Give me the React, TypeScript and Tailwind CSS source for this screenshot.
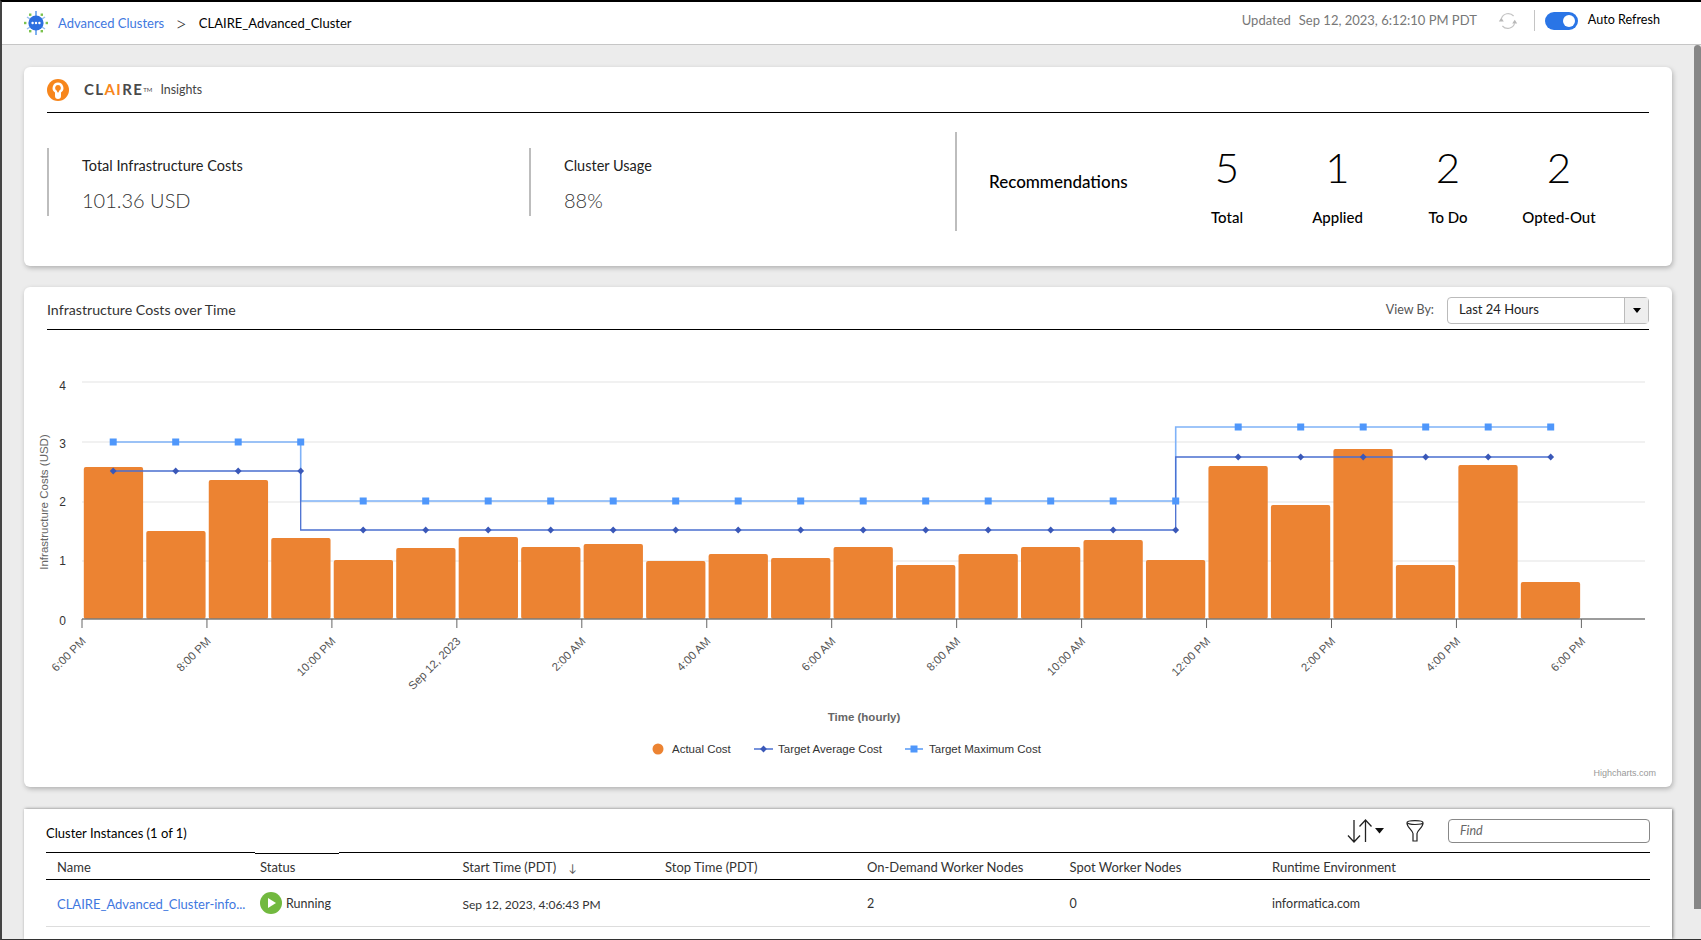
import React from 'react';

const sans = "font-['Lato','Noto_Sans',sans-serif]";

const barTops = [467, 531, 480, 538, 560, 548, 537, 547, 544, 561, 554, 558, 547, 565, 554, 547, 540, 560, 466, 505, 449, 565, 465, 582];
const tickLabels = ['6:00 PM', '8:00 PM', '10:00 PM', 'Sep 12, 2023', '2:00 AM', '4:00 AM', '6:00 AM', '8:00 AM', '10:00 AM', '12:00 PM', '2:00 PM', '4:00 PM', '6:00 PM'];

const baseY = 619;
const tickX = (i: number) => 82 + i * 124.95;
const pointX = (i: number) => 113.2 + i * 62.5;
const maxY = (i: number) => (i <= 3 ? 442 : i <= 17 ? 501 : 427);
const avgY = (i: number) => (i <= 3 ? 471 : i <= 17 ? 530 : 457);

function stepPath(y: (i: number) => number) {
  let d = `M${pointX(0)} ${y(0)}`;
  for (let i = 1; i < 24; i++) {
    const prev = pointX(i - 1);
    d += ` L${prev} ${y(i)} L${pointX(i)} ${y(i)}`;
  }
  return d;
}

function CostChart() {
  return (
    <svg viewBox="24 330 1648 457" className="block w-full h-[457px]">
      {[382, 442, 502, 561].map((y) => (
        <line key={y} x1={82} x2={1645} y1={y} y2={y} stroke="#ececec" strokeWidth={1.4} />
      ))}
      {[0, 1, 2, 3, 4].map((n) => (
        <text key={n} x={62.5} y={[624.5, 565, 506, 448, 389.5][n]} textAnchor="middle" fontSize={12} fill="#333333" fontFamily="Liberation Sans">
          {n}
        </text>
      ))}
      <text transform="translate(48 502) rotate(-90)" textAnchor="middle" fontSize={11.5} fill="#666666" fontFamily="Liberation Sans">
        Infrastructure Costs (USD)
      </text>

      {barTops.map((top, i) => (
        <rect key={i} x={82 + i * 62.48 + 1.8} y={top} width={59.3} height={baseY - top} rx={2} fill="#ec8332" />
      ))}

      <line x1={82} x2={1645} y1={baseY} y2={baseY} stroke="#7b7b7b" strokeWidth={1.5} />
      {tickLabels.map((label, i) => (
        <g key={i}>
          <line x1={tickX(i)} x2={tickX(i)} y1={baseY} y2={baseY + 9} stroke="#666666" strokeWidth={1} />
          <text transform={`translate(${tickX(i) + 4.5} 642) rotate(-45)`} textAnchor="end" fontSize={11.5} fill="#555555" fontFamily="Liberation Sans">
            {label}
          </text>
        </g>
      ))}

      <path d={stepPath(maxY)} fill="none" stroke="#7fb2f8" strokeWidth={1.6} />
      <path d={stepPath(avgY)} fill="none" stroke="#4a6fd0" strokeWidth={1.3} />
      {barTops.map((_, i) => (
        <g key={i}>
          <rect x={pointX(i) - 3.5} y={maxY(i) - 3.5} width={7} height={7} fill="#4f97fb" />
          <path d={`M${pointX(i)} ${avgY(i) - 3.4} l3.4 3.4 l-3.4 3.4 l-3.4 -3.4 z`} fill="#3a58b8" />
        </g>
      ))}

      <text x={864} y={721} textAnchor="middle" fontSize={11.5} fontWeight={700} fill="#666666" fontFamily="Liberation Sans">
        Time (hourly)
      </text>

      <circle cx={658} cy={749} r={5.5} fill="#ec8332" />
      <text x={672} y={753} fontSize={11.5} fill="#333333" fontFamily="Liberation Sans">Actual Cost</text>
      <line x1={754} x2={773} y1={749} y2={749} stroke="#4a6fd0" strokeWidth={1.5} />
      <path d="M763.5 745.6 l3.4 3.4 l-3.4 3.4 l-3.4 -3.4 z" fill="#3a58b8" />
      <text x={778} y={753} fontSize={11.5} fill="#333333" fontFamily="Liberation Sans">Target Average Cost</text>
      <line x1={905} x2={923} y1={749} y2={749} stroke="#7fb2f8" strokeWidth={2} />
      <rect x={910.5} y={745.5} width={7} height={7} fill="#4f97fb" />
      <text x={929} y={753} fontSize={11.5} fill="#333333" fontFamily="Liberation Sans">Target Maximum Cost</text>

      <text x={1656} y={776} textAnchor="end" fontSize={9} fill="#999999" fontFamily="Liberation Sans">Highcharts.com</text>
    </svg>
  );
}

function ClusterLogo() {
  return (
    <svg viewBox="0 0 24 24" className="w-[24px] h-[24px]">
      <g stroke="#4a90e8" strokeWidth={1.4}>
        <line x1="12" y1="0" x2="12" y2="24" />
        <line x1="3" y1="6" x2="21" y2="18" opacity="0.6" />
        <line x1="21" y1="6" x2="3" y2="18" opacity="0.6" />
      </g>
      <circle cx="12" cy="12" r="7.6" fill="#2c6fe0" />
      <circle cx="8.6" cy="12" r="1.2" fill="#fff" />
      <circle cx="12" cy="12" r="1.2" fill="#fff" />
      <circle cx="15.4" cy="12" r="1.2" fill="#fff" />
      <g fill="#7cc24e">
        <rect x="5" y="2.5" width="2.4" height="2.4" />
        <rect x="16.6" y="2.5" width="2.4" height="2.4" />
        <rect x="0" y="10.8" width="2.4" height="2.4" />
        <rect x="21.6" y="10.8" width="2.4" height="2.4" />
        <rect x="5" y="19" width="2.4" height="2.4" />
        <rect x="16.6" y="19" width="2.4" height="2.4" />
      </g>
    </svg>
  );
}

function ClaireBulb() {
  return (
    <svg viewBox="0 0 22 22" className="w-[22px] h-[22px]">
      <circle cx="11" cy="11" r="11" fill="#f7861c" />
      <path d="M11 3.6a5.4 5.4 0 0 0-3 9.9v3.4a3 3 0 0 0 6 0v-3.4a5.4 5.4 0 0 0-3-9.9z" fill="#fff" />
      <path d="M11 6a3 3 0 0 0-1.4 5.6l1 2h.8l1-2A3 3 0 0 0 11 6z" fill="#f7861c" />
    </svg>
  );
}

function RefreshIcon() {
  return (
    <svg viewBox="0 0 20 20" className="w-[20px] h-[20px]" fill="none">
      <path d="M3.4 7.6A7.2 7.2 0 0 1 15.6 5" stroke="#c4c4c4" strokeWidth={1.2} />
      <path d="M16.6 12.4A7.2 7.2 0 0 1 4.4 15" stroke="#c4c4c4" strokeWidth={1.2} />
      <path d="M0.8 10.4 h5 l-2.5 -3.6 z" fill="#b8b8b8" />
      <path d="M14.2 9.6 h5 l-2.5 3.6 z" fill="#b8b8b8" transform="rotate(180 16.7 11)" />
    </svg>
  );
}

function SortIcon() {
  return (
    <svg viewBox="0 0 37 24" className="w-[37px] h-[24px]" fill="none" stroke="#222222" strokeWidth={1.3}>
      <path d="M7 1v22M1 16.5l6 6.5 6-6.5" />
      <path d="M18.5 23V1M12.5 7.5l6-6.5 6 6.5" />
      <path d="M28 9h9l-4.5 5.5z" fill="#111111" stroke="none" />
    </svg>
  );
}

function FunnelIcon() {
  return (
    <svg viewBox="0 0 18 22" className="w-[18px] h-[22px]" fill="none" stroke="#222222" strokeWidth={1.2}>
      <ellipse cx="9" cy="2.6" rx="8" ry="1.9" />
      <path d="M1 3c0 4.5 5.5 7 6 10.5V21h4v-7.5C11.5 10 17 7.5 17 3" />
    </svg>
  );
}

function Stat({ label, value, className }: { label: string; value: string; className: string }) {
  return (
    <div className={`h-[68px] border-l-2 border-[#bdbdbd] pl-[33px] pt-[6px] ${className}`}>
      <div className="text-[14.5px] leading-[24px] text-[#222]">{label}</div>
      <div className="mt-[9px] text-[20px] leading-[26px] font-light text-[#333]">{value}</div>
    </div>
  );
}

function Rec({ value, label, className }: { value: string; label: string; className: string }) {
  return (
    <div className={`flex flex-col items-center ${className}`}>
      <div className="text-[42px] leading-[50px] font-light text-black">{value}</div>
      <div className="mt-[15px] text-[15px] leading-[20px] font-medium text-black whitespace-nowrap">{label}</div>
    </div>
  );
}

const columns = [
  { label: 'Name', w: 'w-[203px]' },
  { label: 'Status', w: 'w-[202.5px]' },
  { label: 'Start Time (PDT)', w: 'w-[202.5px]', sort: true },
  { label: 'Stop Time (PDT)', w: 'w-[202px]' },
  { label: 'On-Demand Worker Nodes', w: 'w-[202.5px]' },
  { label: 'Spot Worker Nodes', w: 'w-[202.5px]' },
  { label: 'Runtime Environment', w: 'flex-1' },
];

export default function App() {
  return (
    <div className={`${sans} w-[1701px] h-[940px] overflow-hidden flex flex-col bg-[#ececec] border-t-2 border-l-2 border-b border-t-black border-l-[#444] border-b-[#333]`}>
      {/* Top bar */}
      <header className="h-[43px] shrink-0 bg-white border-b border-[#c6c6c6] flex items-center text-[13px]">
        <div className="ml-[22px]">
          <ClusterLogo />
        </div>
        <span className="ml-[10px] mt-[2px] text-[#3f78e0]">Advanced Clusters</span>
        <span className="ml-[11px] text-[20px] font-light leading-none text-[#222]">&gt;</span>
        <span className="ml-[12px] mt-[2px] text-black">CLAIRE_Advanced_Cluster</span>
        <div className="ml-auto flex items-center -mt-[5px]">
          <span className="text-[#777]">Updated</span>
          <span className="ml-[8px] text-[#777]">Sep 12, 2023, 6:12:10 PM PDT</span>
          <div className="ml-[21px]">
            <RefreshIcon />
          </div>
          <div className="ml-[16px] w-px h-[21px] bg-[#c4c4c4]" />
          <div className="ml-[10px] w-[33px] h-[18px] rounded-full bg-[#2a75e6] flex items-center justify-end pr-[3px]">
            <div className="w-[12px] h-[12px] rounded-full bg-white" />
          </div>
          <span className="ml-[10px] mr-[41px] text-[12.6px] text-black">Auto Refresh</span>
        </div>
      </header>

      <div className="flex-1 flex min-h-0">
        <main className="flex-1 min-w-0 pl-[22px] pr-[22px] pt-[22px] flex flex-col">
          {/* CLAIRE insights */}
          <section className="h-[199px] shrink-0 bg-white rounded-md shadow-[1px_2px_5px_rgba(0,0,0,0.25)] px-[23px]">
            <div className="h-[46px] border-b border-black flex items-center">
              <ClaireBulb />
              <span className="ml-[15px] text-[15px] font-bold tracking-[1.4px] text-[#4a4a4a]">
                CL<span className="text-[#f7861c]">AI</span>RE
                <sup className="text-[6px] font-normal tracking-normal">TM</sup>
              </span>
              <span className="ml-[8px] mt-[1px] text-[12.4px] text-[#444]">Insights</span>
            </div>
            <div className="flex items-start pt-[35px]">
              <Stat label="Total Infrastructure Costs" value="101.36 USD" className="w-[482px]" />
              <Stat label="Cluster Usage" value="88%" className="w-[426px]" />
              <div className="-mt-[16px] h-[99px] border-l-2 border-[#bdbdbd] pl-[32px] flex items-start">
                <div className="mt-[38px] w-[183px] text-[17px] leading-[24px] font-medium text-black">Recommendations</div>
                <div className="flex mt-[10px]">
                  <Rec value="5" label="Total" className="w-[110px]" />
                  <Rec value="1" label="Applied" className="w-[111px]" />
                  <Rec value="2" label="To Do" className="w-[110px]" />
                  <Rec value="2" label="Opted-Out" className="w-[112px]" />
                </div>
              </div>
            </div>
          </section>

          {/* Costs chart */}
          <section className="mt-[21px] h-[500px] shrink-0 bg-white rounded-md shadow-[1px_2px_5px_rgba(0,0,0,0.25)]">
            <div className="mx-[23px] h-[43px] border-b border-black flex items-center justify-between pt-[4px]">
              <span className="text-[14.2px] text-[#333]">Infrastructure Costs over Time</span>
              <div className="flex items-center">
                <span className="text-[12.5px] text-[#555]">View By:</span>
                <div className="ml-[13px] w-[202px] h-[27px] border border-[#bbb] rounded-sm flex items-center justify-between">
                  <span className="ml-[11px] text-[13px] text-[#222]">Last 24 Hours</span>
                  <div className="w-[24px] h-full bg-[#eeeeee] border-l border-[#bbb] flex items-center justify-center">
                    <div className="w-0 h-0 border-x-[4px] border-t-[5px] border-x-transparent border-t-black" />
                  </div>
                </div>
              </div>
            </div>
            <CostChart />
          </section>

          {/* Cluster instances */}
          <section className="mt-[22px] flex-1 bg-white shadow-[1px_0_3px_rgba(0,0,0,0.5)] px-[22px]">
            <div className="h-[43px] flex items-center">
              <span className="mt-[6px] text-[13px] text-black">Cluster Instances (1 of 1)</span>
              <div className="ml-auto flex items-center">
                <SortIcon />
                <div className="ml-[22px]">
                  <FunnelIcon />
                </div>
                <div className="ml-[24px] w-[202px] h-[24px] border border-[#888] rounded-sm flex items-center pl-[11px] pt-[2px]">
                  <span className="text-[12.5px] italic text-[#666]">Find</span>
                </div>
              </div>
            </div>
            <div className="relative h-[28px] border-y-[1.5px] border-black flex items-center pt-[4px] text-[13px] text-[#333]">
              {/* column resize artefact on the top rule above Status */}
              <div className="absolute left-[209px] -top-[1.5px] w-[84px] h-[1px] bg-white" />
              <div className="absolute left-[209px] -top-[0.5px] w-[84px] h-[1px] bg-black" />
              {columns.map((col) => (
                <div key={col.label} className={`${col.w} pl-[11px] flex items-center`}>
                  {col.label}
                  {col.sort && <span className="ml-[12px] text-[11px] text-[#555]">↓</span>}
                </div>
              ))}
            </div>
            <div className="h-[47px] border-b border-[#dddddd] flex items-center pt-[3px] text-[12.5px] text-[#333]">
              <div className="w-[203px] pl-[11px] text-[13px] text-[#3f78e0] whitespace-nowrap">CLAIRE_Advanced_Cluster-info...</div>
              <div className="w-[202.5px] pl-[11px] flex items-center">
                <svg viewBox="0 0 22 22" className="w-[22px] h-[22px] -mt-[3px]">
                  <circle cx="11" cy="11" r="11" fill="#72b93f" />
                  <path d="M8 6l8 5-8 5z" fill="#fff" />
                </svg>
                <span className="ml-[4px] -mt-[1px]">Running</span>
              </div>
              <div className="w-[202.5px] pl-[11px] text-[12px]">Sep 12, 2023, 4:06:43 PM</div>
              <div className="w-[202px]" />
              <div className="w-[202.5px] pl-[11px]">2</div>
              <div className="w-[202.5px] pl-[11px]">0</div>
              <div className="flex-1 pl-[11px]">informatica.com</div>
            </div>
          </section>
        </main>

        {/* Scrollbar */}
        <div className="w-[7px] shrink-0">
          <div className="h-[864px] bg-[#868686] rounded-t-[4px]" />
        </div>
      </div>
    </div>
  );
}
